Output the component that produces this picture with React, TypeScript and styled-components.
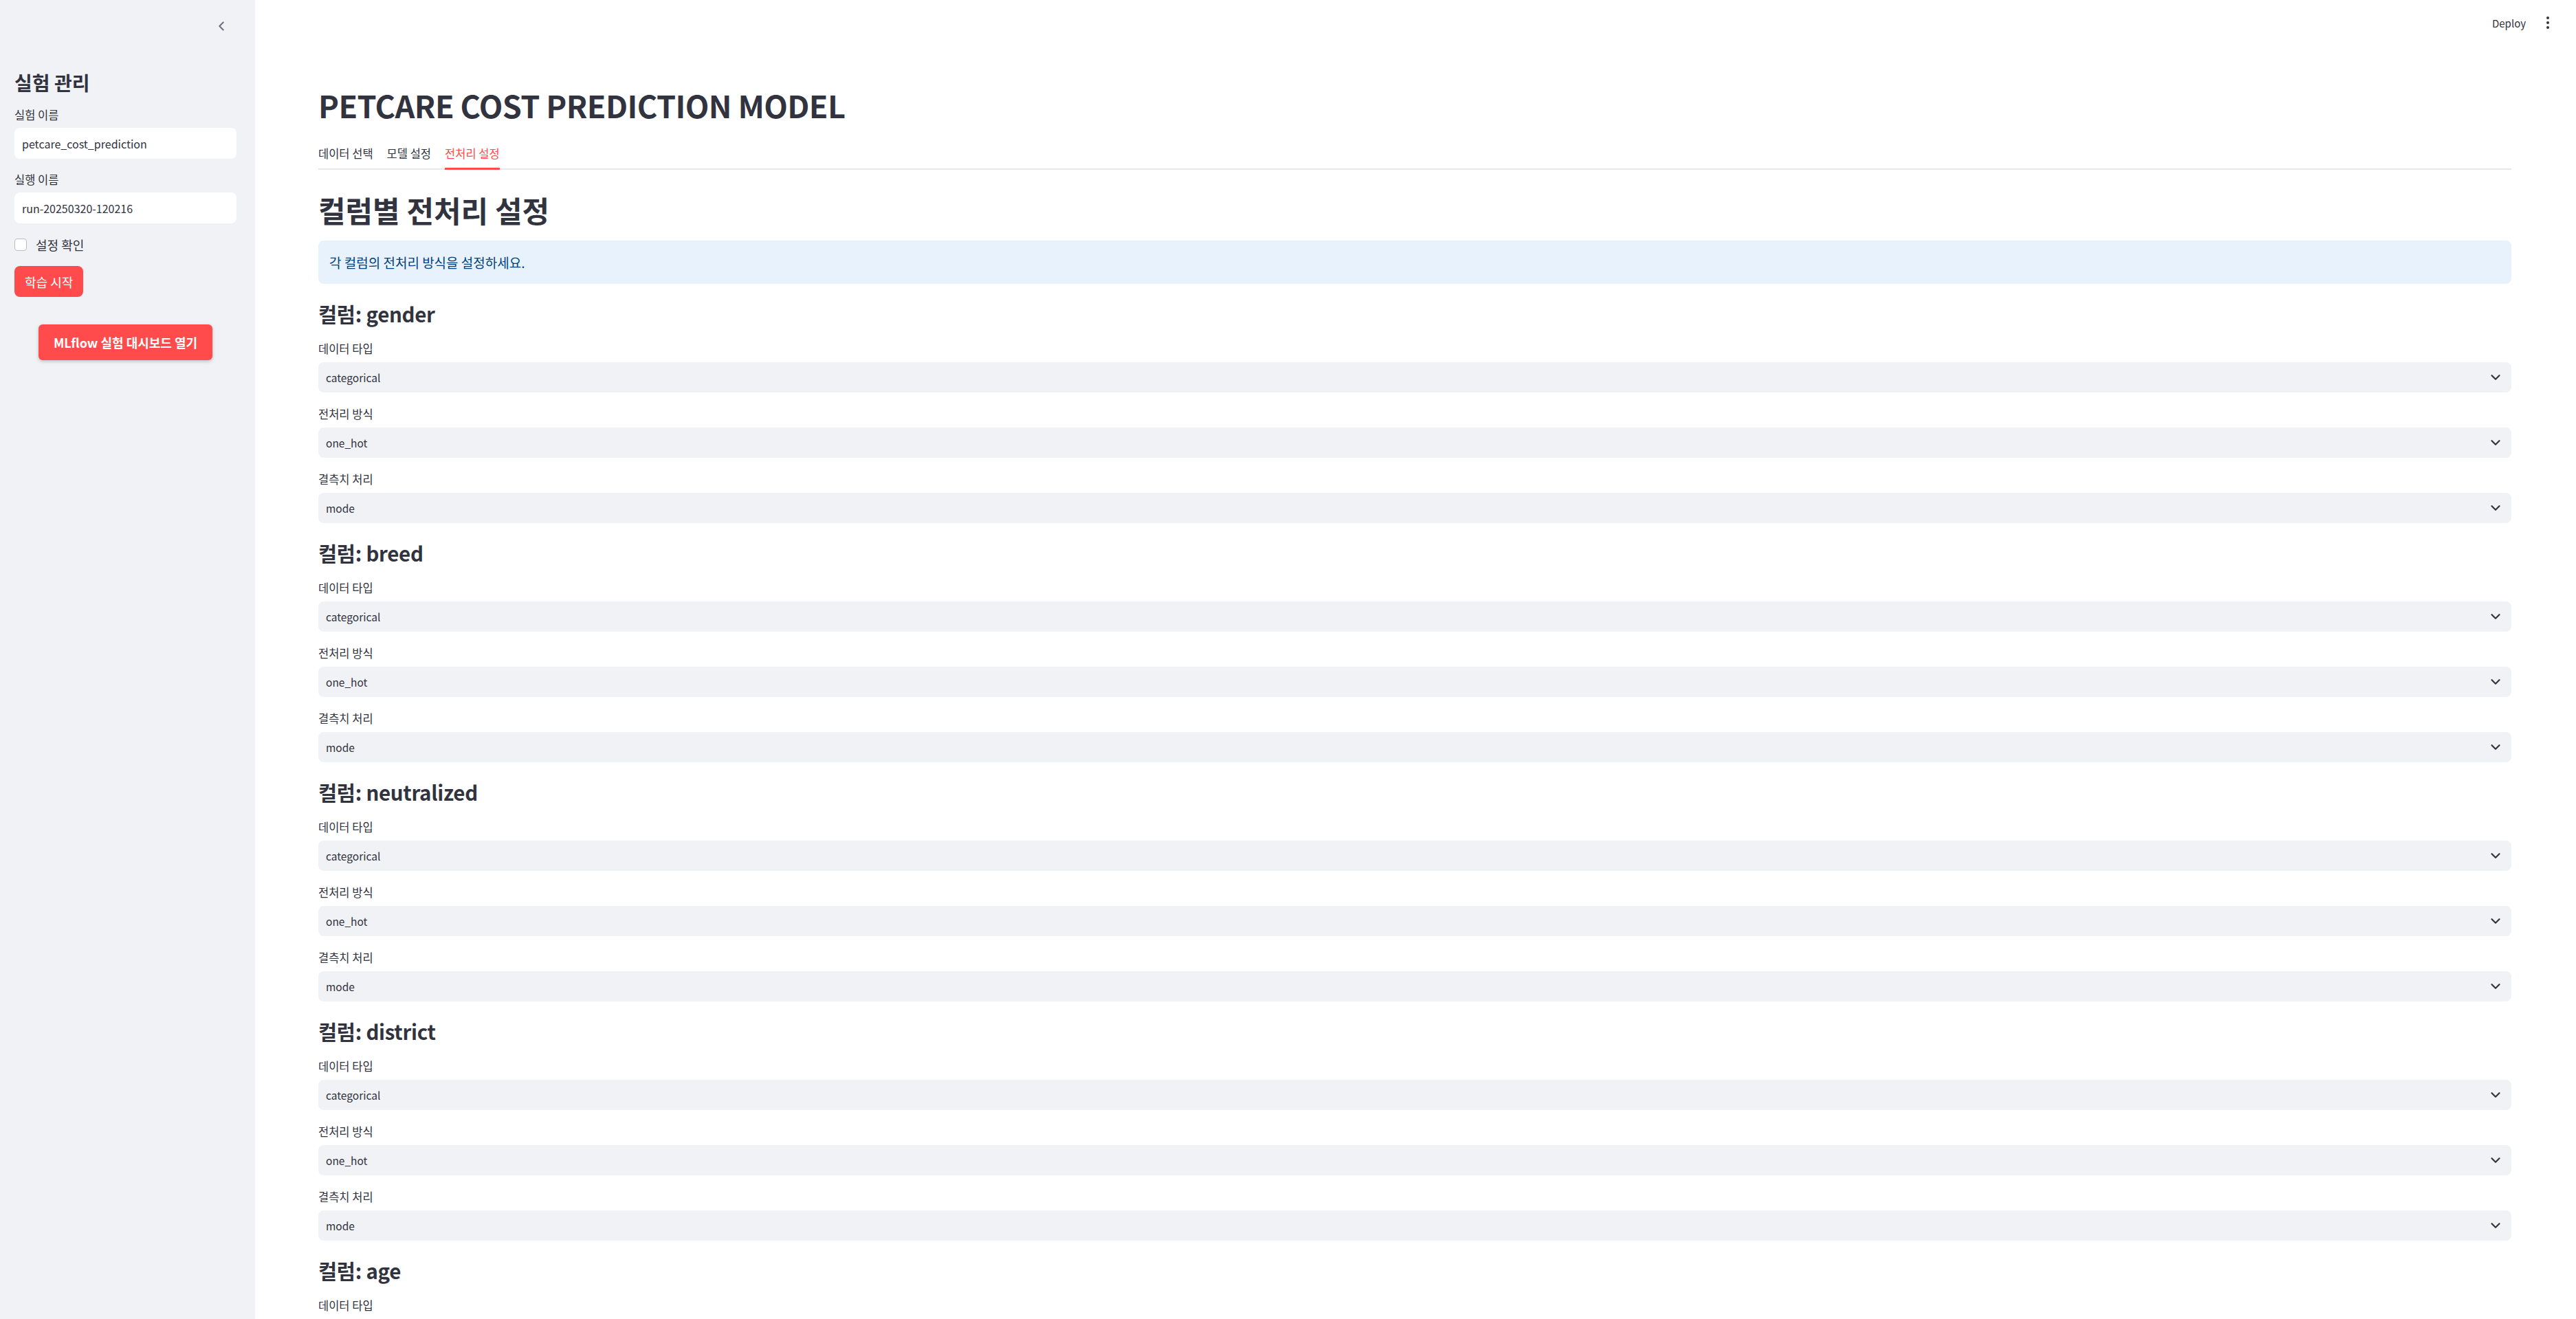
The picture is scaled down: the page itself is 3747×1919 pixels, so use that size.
import React from "react";
import styled, { createGlobalStyle } from "styled-components";
import { ChevronDown, ChevronLeft } from "lucide-react";

const GlobalStyle = createGlobalStyle`
  html, body {
    margin: 0;
    padding: 0;
    overflow: hidden;
    background: #ffffff;
  }
  * { box-sizing: border-box; }
  body {
    font-family: "Noto Sans CJK KR", "Noto Sans", sans-serif;
    color: #31333f;
  }
`;

const Shell = styled.div`
  display: flex;
  width: 100vw;
  height: 100vh;
  overflow: hidden;
`;

/* ---------------- Sidebar ---------------- */

const Sidebar = styled.aside`
  width: 371px;
  flex: 0 0 371px;
  height: 100%;
  background: #f0f2f6;
  display: flex;
  flex-direction: column;
  padding: 0 27px 0 21px;
`;

const SidebarTop = styled.div`
  height: 75px;
  display: flex;
  align-items: center;
  justify-content: flex-end;
  padding-right: 11px;
  color: #6b6e7a;
`;

const SidebarTitle = styled.h2`
  margin: 26px 0 0;
  font-size: 28px;
  line-height: 38px;
  font-weight: 700;
  color: #31333f;
`;

const SidebarStack = styled.div`
  display: flex;
  flex-direction: column;
  gap: 19px;
  margin-top: 17px;
`;

const FieldLabel = styled.label`
  display: block;
  font-size: 16.5px;
  line-height: 23px;
  color: #31333f;
  margin-bottom: 7px;
`;

const TextInput = styled.div`
  height: 45px;
  background: #ffffff;
  border-radius: 8px;
  display: flex;
  align-items: center;
  padding: 0 11px;
  font-size: 16px;
  color: #31333f;
`;

const CheckRow = styled.div`
  display: flex;
  align-items: center;
  gap: 13px;
  height: 24px;
  font-size: 18px;
  color: #31333f;
`;

const CheckBox = styled.span`
  width: 18px;
  height: 18px;
  border: 1px solid #b9bcc4;
  border-radius: 4px;
  background: #ffffff;
`;

const PrimaryButton = styled.button<{ $wide?: boolean }>`
  align-self: ${(p) => (p.$wide ? "center" : "flex-start")};
  height: ${(p) => (p.$wide ? "52px" : "45px")};
  padding: 0 ${(p) => (p.$wide ? "22px" : "15px")};
  border: none;
  border-radius: ${(p) => (p.$wide ? "6px" : "8px")};
  background: #ff4b4b;
  color: #ffffff;
  font-family: inherit;
  font-size: 18px;
  font-weight: ${(p) => (p.$wide ? 700 : 400)};
  box-shadow: ${(p) => (p.$wide ? "0 2px 5px rgba(0,0,0,0.2)" : "none")};
  margin-top: ${(p) => (p.$wide ? "21px" : "0")};
  cursor: pointer;
`;

/* ---------------- Main ---------------- */

const Main = styled.main`
  flex: 1;
  display: flex;
  flex-direction: column;
  min-width: 0;
  height: 100%;
`;

const Header = styled.header`
  height: 66px;
  flex: 0 0 66px;
  display: flex;
  align-items: center;
  justify-content: flex-end;
  gap: 29px;
  padding-right: 38px;
`;

const DeployLink = styled.span`
  font-size: 15px;
  color: #31333f;
`;

const Content = styled.div`
  padding: 58px 94px 0 92px;
  display: flex;
  flex-direction: column;
`;

const Title = styled.h1`
  margin: 0;
  font-size: 45px;
  line-height: 58px;
  font-weight: 700;
  letter-spacing: -0.6px;
  color: #31333f;
`;

const TabBar = styled.div`
  margin-top: 19px;
  display: flex;
  gap: 20px;
  border-bottom: 2px solid #e8e9ec;
`;

const Tab = styled.div<{ $active?: boolean }>`
  height: 44px;
  display: flex;
  align-items: center;
  font-size: 16.5px;
  color: ${(p) => (p.$active ? "#ff4b4b" : "#31333f")};
  position: relative;
  &::after {
    content: "";
    display: ${(p) => (p.$active ? "block" : "none")};
    position: absolute;
    left: 0;
    right: 0;
    bottom: -2px;
    height: 3px;
    background: #ff4b4b;
  }
`;

const Stack = styled.div`
  margin-top: 35px;
  display: flex;
  flex-direction: column;
  gap: 22px;
`;

const Subheader = styled.h2`
  margin: 0;
  font-size: 43px;
  line-height: 46px;
  font-weight: 700;
  color: #31333f;
`;

const InfoBox = styled.div`
  height: 63px;
  border-radius: 8px;
  background: #e8f2fc;
  color: #004280;
  display: flex;
  align-items: center;
  padding: 0 16px;
  font-size: 19px;
`;

const Section = styled.section`
  display: flex;
  flex-direction: column;
  gap: 20px;
`;

const SectionHeading = styled.h3`
  margin: 0 0 -1px;
  font-size: 29.5px;
  line-height: 42px;
  font-weight: 600;
  letter-spacing: -0.3px;
  color: #31333f;
`;

const Field = styled.div`
  display: flex;
  flex-direction: column;
`;

const MainLabel = styled.label`
  font-size: 16.5px;
  line-height: 23px;
  color: #31333f;
  margin-bottom: 8px;
`;

const SelectBox = styled.div`
  height: 44px;
  border-radius: 8px;
  background: #f0f2f6;
  display: flex;
  align-items: center;
  justify-content: space-between;
  padding: 0 12px 0 11px;
  font-size: 15.5px;
  color: #31333f;
`;

const DotsIcon = () => (
  <svg width="6" height="18" viewBox="0 0 6 18" aria-hidden="true">
    <circle cx="3" cy="2" r="2" fill="#31333f" />
    <circle cx="3" cy="9" r="2" fill="#31333f" />
    <circle cx="3" cy="16" r="2" fill="#31333f" />
  </svg>
);

type Col = { name: string; dtype: string; method: string; missing: string };

const columns: Col[] = [
  { name: "gender", dtype: "categorical", method: "one_hot", missing: "mode" },
  { name: "breed", dtype: "categorical", method: "one_hot", missing: "mode" },
  { name: "neutralized", dtype: "categorical", method: "one_hot", missing: "mode" },
  { name: "district", dtype: "categorical", method: "one_hot", missing: "mode" },
  { name: "age", dtype: "numerical", method: "standard_scaler", missing: "mean" },
];

const Select = ({ label, value }: { label: string; value: string }) => (
  <Field>
    <MainLabel>{label}</MainLabel>
    <SelectBox>
      <span>{value}</span>
      <ChevronDown size={22} strokeWidth={2.4} color="#31333f" />
    </SelectBox>
  </Field>
);

export default function App() {
  return (
    <>
      <GlobalStyle />
      <Shell>
        <Sidebar>
          <SidebarTop>
            <ChevronLeft size={22} strokeWidth={2.2} />
          </SidebarTop>
          <SidebarTitle>실험 관리</SidebarTitle>
          <SidebarStack>
            <Field>
              <FieldLabel>실험 이름</FieldLabel>
              <TextInput>petcare_cost_prediction</TextInput>
            </Field>
            <Field>
              <FieldLabel>실행 이름</FieldLabel>
              <TextInput>run-20250320-120216</TextInput>
            </Field>
            <CheckRow>
              <CheckBox />
              설정 확인
            </CheckRow>
            <PrimaryButton>학습 시작</PrimaryButton>
            <PrimaryButton $wide>MLflow 실험 대시보드 열기</PrimaryButton>
          </SidebarStack>
        </Sidebar>
        <Main>
          <Header>
            <DeployLink>Deploy</DeployLink>
            <DotsIcon />
          </Header>
          <Content>
            <Title>PETCARE COST PREDICTION MODEL</Title>
            <TabBar>
              <Tab>데이터 선택</Tab>
              <Tab>모델 설정</Tab>
              <Tab $active>전처리 설정</Tab>
            </TabBar>
            <Stack>
              <Subheader>컬럼별 전처리 설정</Subheader>
              <InfoBox>각 컬럼의 전처리 방식을 설정하세요.</InfoBox>
              {columns.map((c) => (
                <Section key={c.name}>
                  <SectionHeading>컬럼: {c.name}</SectionHeading>
                  <Select label="데이터 타입" value={c.dtype} />
                  <Select label="전처리 방식" value={c.method} />
                  <Select label="결측치 처리" value={c.missing} />
                </Section>
              ))}
            </Stack>
          </Content>
        </Main>
      </Shell>
    </>
  );
}
